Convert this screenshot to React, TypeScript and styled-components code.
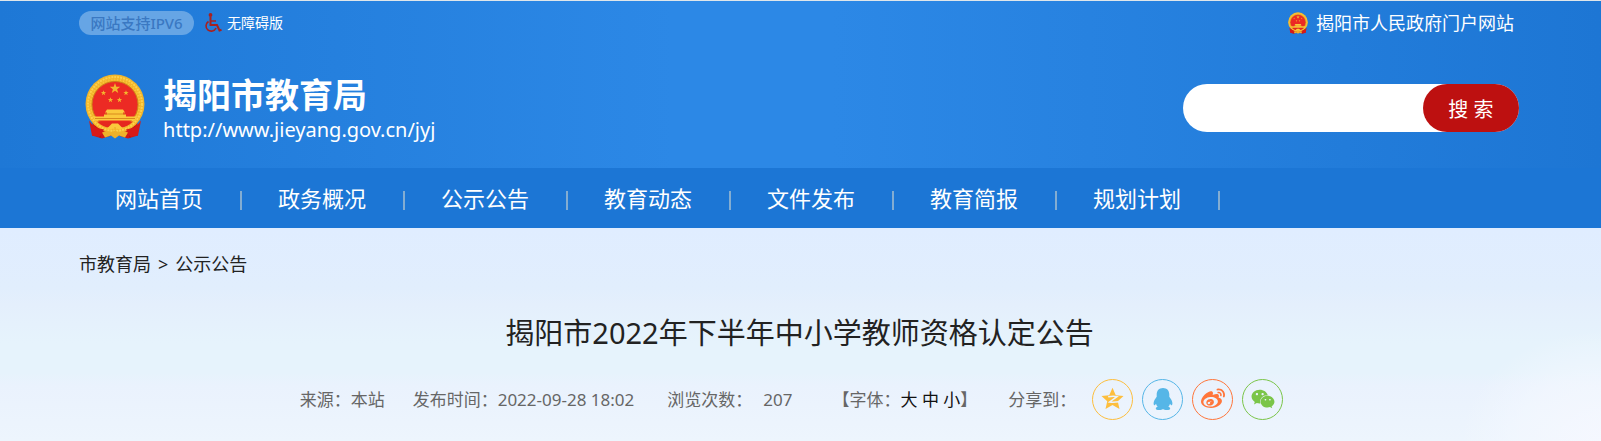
import React from "react";
import styled, { createGlobalStyle } from "styled-components";
import { FaWeibo, FaWeixin } from "react-icons/fa";

const GlobalStyle = createGlobalStyle`
  *, *::before, *::after { box-sizing: border-box; }
  body {
    margin: 0;
    color: #222;
    font-family: "Noto Sans", "Noto Sans CJK SC", sans-serif;
    font-size: 18px;
  }
  a { color: inherit; text-decoration: none; }
  button, input { font: inherit; }
`;

const Page = styled.div`
  min-height: 100vh;
  display: flex;
  flex-direction: column;
`;

const Container = styled.div`
  width: calc(90% + 2px);
  margin: 0 auto;
  padding-right: 3px;
`;

const Header = styled.header`
  border-top: 1px solid #dfe6ea;
  background: linear-gradient(90deg, #1e78d6 0%, #2c88e6 42%, #2c88e6 52%, #1d76d4 100%);
`;

const TopBar = styled(Container)`
  display: flex;
  align-items: center;
  justify-content: space-between;
  height: 44px;
  padding-right: 8px;
`;

const TopLinks = styled.div`
  display: flex;
  align-items: center;
`;

const Ipv6Badge = styled.span`
  width: 115px;
  margin-right: 10px;
  border-radius: 12px;
  background: #66a5e5;
  color: #3a78c2;
  font-size: 15px;
  font-weight: 500;
  line-height: 24px;
  text-align: center;
`;

const AccessLink = styled.a`
  display: flex;
  align-items: center;
  gap: 5px;
  color: #fff;
  font-size: 14px;
  line-height: 20px;

  svg { color: #a8201f; }
`;

const PortalLink = styled.a`
  display: flex;
  align-items: center;
  gap: 8px;
  color: #fff;
  line-height: 24px;
`;

const Masthead = styled(Container)`
  display: flex;
  align-items: center;
  justify-content: space-between;
  height: 123px;
`;

const Brand = styled.a`
  display: flex;
  align-items: center;
  gap: 18px;
  padding-left: 6px;
  color: #fff;
`;

const BrandText = styled.span`
  padding-top: 8px;
`;

const BrandName = styled.strong`
  display: block;
  font-family: "Liberation Sans", "Noto Sans CJK SC", sans-serif;
  font-size: 34px;
  font-weight: 700;
  line-height: 39px;
`;

const BrandUrl = styled.span`
  display: block;
  font-size: 20px;
  line-height: 28px;
`;

const SearchForm = styled.form`
  display: flex;
  width: 336px;
  height: 48px;
  margin-top: 3px;
  border-radius: 24px;
  background: #fff;
`;

const SearchInput = styled.input`
  flex: 1;
  min-width: 0;
  padding: 0 20px;
  border: 0;
  outline: 0;
  background: transparent;
`;

const SearchButton = styled.button`
  width: 96px;
  border: 0;
  border-radius: 24px;
  background: #bd1010;
  color: #fff;
  font-size: 20px;
`;

const Nav = styled.nav`
  background: #1c76d5;
`;

const NavList = styled(Container).attrs({ as: "ul" })`
  display: flex;
  height: 60px;
  padding: 0;
  list-style: none;
`;

const NavItem = styled.li`
  display: flex;
  align-items: center;
  width: 163px;
  padding-left: 36px;
  color: #fff;
  font-size: 22px;
  line-height: 32px;

  &::after {
    content: "";
    width: 2px;
    height: 19px;
    margin: 4px 0 0 37px;
    background: #83add2;
  }
`;

const Article = styled.main`
  flex: 1;
  background:
    radial-gradient(ellipse 140px 110px at 100% 100%, rgba(246, 248, 255, 0.9), rgba(244, 248, 255, 0.6) 60%, rgba(244, 248, 255, 0)),
    linear-gradient(180deg, #e0edff 0%, #e1eefd 28%, #e4effc 36%, #e6f3fc 54%, #e6f3fc 68%, #eaf2fd 74%, #edf5fd 100%);
`;

const Breadcrumb = styled(Container).attrs({ as: "nav" })`
  display: flex;
  gap: 7px;
  padding-top: 23px;
  line-height: 26px;
`;

const Title = styled.h1`
  margin: 0;
  padding: 35px 2px 0 0;
  font-size: 29px;
  font-weight: 400;
  line-height: 42px;
  text-align: center;
`;

const Meta = styled(Container)`
  display: flex;
  align-items: center;
  justify-content: center;
  gap: 28px;
  padding: 25px 18px 20px 0;
  color: #666;
  font-size: 17px;
  line-height: 24px;
  white-space: nowrap;
`;

const PublishTime = styled.span`
  margin-right: 5px;
`;

const ViewCount = styled.span`
  margin-left: 11px;
  margin-right: 12px;
`;

const SizeButton = styled.button`
  padding: 0;
  border: 0;
  background: none;
  color: #111;
`;

const Share = styled.div`
  display: flex;
  align-items: center;
  gap: 16px;
  margin-left: 3px;
`;

const ShareIcons = styled.div`
  display: flex;
  gap: 9px;
`;

const ShareLink = styled.a<{ $color: string }>`
  display: flex;
  align-items: center;
  justify-content: center;
  width: 41px;
  height: 41px;
  padding-bottom: 2px;
  border: 1px solid ${(p) => p.$color};
  border-radius: 50%;
  color: ${(p) => p.$color};
`;

const starPoints = (cx: number, cy: number, r: number) =>
  Array.from({ length: 10 }, (_, i) => {
    const radius = i % 2 ? r * 0.4 : r;
    const angle = (Math.PI / 5) * i - Math.PI / 2;
    return `${cx + radius * Math.cos(angle)},${cy + radius * Math.sin(angle)}`;
  }).join(" ");

function Emblem({ width, height }: { width: number; height: number }) {
  return (
    <svg width={width} height={height} viewBox="0 0 60 64" aria-hidden="true">
      <path d="M8 44 L7 61 L17 64 L30 60 L43 64 L53 61 L52 44z" fill="#cf1717" />
      <path d="M11 50v11M15 52v11M45 52v11M49 50v11" stroke="#a90f10" strokeWidth="1" />
      <circle cx="30" cy="29.5" r="29.5" fill="#f2b52a" />
      <circle cx="30" cy="29.5" r="27" fill="none" stroke="#fdd04c" strokeWidth="2" strokeDasharray="2 1" />
      <circle cx="30" cy="29.5" r="24.500" fill="none" stroke="#fbc83f" strokeWidth="2" strokeDasharray="1 2" />
      <circle cx="30" cy="30" r="23" fill="#ec2a24" stroke="#cf7d18" strokeWidth="1" />
      <g fill="#f3b72e">
        <polygon points={starPoints(30, 14, 5.5)} />
        <polygon points={starPoints(18.5, 18.5, 2.8)} />
        <polygon points={starPoints(41, 18.5, 2.8)} />
        <polygon points={starPoints(25.5, 25.5, 2.8)} />
        <polygon points={starPoints(34.5, 25.5, 2.8)} />
      </g>
      <path d="M22 35h16l2 3h-2v2h3v2h11l-2 4H10l-2-4h11v-2h3v-2h-2z" fill="#fbc93c" />
      <path d="M20 39.5h20M10 44h40" stroke="#d98a1c" strokeWidth="1" />
      <path d="M4 46q5 8 15 9l-4 7-8-1zM56 46q-5 8-15 9l4 7 8-1z" fill="#d81a18" />
      <path d="M12 47h36q-5 5-11 6l-7-3-7 3q-6-1-11-6z" fill="#e5281f" />
      <path d="M22 54l5-5h6l5 5-4 1-4-2-4 2z" fill="#fbc93c" />
      <path d="M17 58q5-2 9 0l4-2 4 2q4-2 9 0l-3 5-6-2-4 3-4-3-6 2z" fill="#efb12a" />
    </svg>
  );
}

function WheelchairIcon() {
  return (
    <svg width="18" height="20" viewBox="0 0 18 20" fill="none" stroke="currentColor" aria-hidden="true">
      <circle cx="6.500" cy="2" r="1.900" fill="currentColor" stroke="none" />
      <path d="M6.500 4v8h6.500l2.500 5.500 2-.8" strokeWidth="2" />
      <path d="M6.500 8h5.500" strokeWidth="1.500" />
      <path d="M4.500 8.500a5.200 5.200 0 1 0 7.500 6.500" strokeWidth="1.600" />
    </svg>
  );
}

function QzoneIcon() {
  return (
    <svg width="23" height="23" viewBox="0 0 24 24" aria-hidden="true">
      <path
        d="M12 .8l3.400 7.700 8.100.8-6 5.600 1.800 8.100L12 18.900 4.700 23l1.800-8.100-6-5.600 8.100-.8z"
        fill="currentColor"
      />
      <path d="M7.500 10.300q5-1 9.200-.2L9 15.600q4 .6 9.400-.2" fill="none" stroke="#eaf3fd" strokeWidth="1.600" />
    </svg>
  );
}

function QqIcon() {
  return (
    <svg width="20" height="22" viewBox="0 0 20 22" aria-hidden="true">
      <path
        d="M10 0C6 0 3.700 2.800 3.700 6.500v2.300C2 11.200.6 13.200.6 15.300c0 1.200.3 2 .8 2 .6 0 1.100-.6 1.600-1.500.3 1.200.9 2.200 1.700 3-1.200.4-1.900 1-1.900 1.700 0 1 1.400 1.500 3.400 1.500 1.700 0 3-.4 3.800-1.100.8.700 2.100 1.100 3.800 1.100 2 0 3.400-.5 3.400-1.500 0-.7-.7-1.300-1.900-1.700.8-.8 1.400-1.800 1.700-3 .5.900 1 1.500 1.600 1.500.5 0 .8-.8.8-2 0-2.100-1.400-4.100-3.100-6.500V6.500C16.300 2.800 14 0 10 0z"
        fill="currentColor"
      />
    </svg>
  );
}

const navItems = ["网站首页", "政务概况", "公示公告", "教育动态", "文件发布", "教育简报", "规划计划"];

export default function App() {
  return (
    <Page>
      <GlobalStyle />
      <Header>
        <TopBar>
          <TopLinks>
            <Ipv6Badge>网站支持IPV6</Ipv6Badge>
            <AccessLink href="#">
              <WheelchairIcon />
              无障碍版
            </AccessLink>
          </TopLinks>
          <PortalLink href="#">
            <Emblem width={20} height={22} />
            揭阳市人民政府门户网站
          </PortalLink>
        </TopBar>
        <Masthead>
          <Brand href="#">
            <Emblem width={60} height={65} />
            <BrandText>
              <BrandName>揭阳市教育局</BrandName>
              <BrandUrl>http://www.jieyang.gov.cn/jyj</BrandUrl>
            </BrandText>
          </Brand>
          <SearchForm role="search">
            <SearchInput type="text" aria-label="搜索" />
            <SearchButton type="button">搜 索</SearchButton>
          </SearchForm>
        </Masthead>
      </Header>
      <Nav>
        <NavList>
          {navItems.map((item) => (
            <NavItem key={item}>
              <a href="#">{item}</a>
            </NavItem>
          ))}
        </NavList>
      </Nav>
      <Article>
        <Breadcrumb>
          <a href="#">市教育局</a>
          <span>&gt;</span>
          <a href="#">公示公告</a>
        </Breadcrumb>
        <Title>揭阳市2022年下半年中小学教师资格认定公告</Title>
        <Meta>
          <span>来源：本站</span>
          <PublishTime>发布时间：2022-09-28 18:02</PublishTime>
          <span>
            浏览次数：<ViewCount>207</ViewCount>
          </span>
          <span>
            【字体：<SizeButton type="button">大</SizeButton> <SizeButton type="button">中</SizeButton>{" "}
            <SizeButton type="button">小</SizeButton>】
          </span>
          <Share>
            分享到：
            <ShareIcons>
              <ShareLink href="#" aria-label="QQ空间" $color="#fdbe3d">
                <QzoneIcon />
              </ShareLink>
              <ShareLink href="#" aria-label="QQ" $color="#56b6e7">
                <QqIcon />
              </ShareLink>
              <ShareLink href="#" aria-label="微博" $color="#ff763b">
                <FaWeibo size={24} />
              </ShareLink>
              <ShareLink href="#" aria-label="微信" $color="#7bc549">
                <FaWeixin size={24} />
              </ShareLink>
            </ShareIcons>
          </Share>
        </Meta>
      </Article>
    </Page>
  );
}
